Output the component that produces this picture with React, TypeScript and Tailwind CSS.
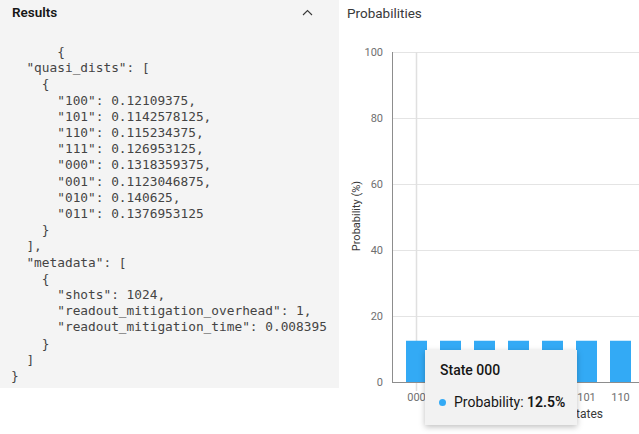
import React from "react";

const json = `      {
  "quasi_dists": [
    {
      "100": 0.12109375,
      "101": 0.1142578125,
      "110": 0.115234375,
      "111": 0.126953125,
      "000": 0.1318359375,
      "001": 0.1123046875,
      "010": 0.140625,
      "011": 0.1376953125
    }
  ],
  "metadata": [
    {
      "shots": 1024,
      "readout_mitigation_overhead": 1,
      "readout_mitigation_time": 0.008395
    }
  ]
}`;

const O = 339; // right panel origin
const bars = ["000", "001", "010", "011", "100", "101", "110", "111"];
const shownLabels = [0, 5, 6];

function Chart() {
  const yTicks = [100, 80, 60, 40, 20];
  const y0 = 382;
  const scale = 3.3;
  return (
    <svg width={300} height={434} className="absolute left-0 top-0" style={{ fontFamily: "Roboto, 'Noto Sans', sans-serif" }}>
      {yTicks.map((t) => (
        <line key={t} x1={392 - O} x2={300} y1={y0 - t * scale + 0.5} y2={y0 - t * scale + 0.5} stroke="#e4e4e4" strokeWidth={1} />
      ))}
      <line x1={416.5 - O} x2={416.5 - O} y1={52} y2={391} stroke="#e0e0e0" strokeWidth={1.5} />
      {bars.map((b, i) => (
        <rect key={b} x={406 - O + i * 34} y={y0 - 12.5 * scale} width={21} height={12.5 * scale} fill="#33aaf5" />
      ))}
      <line x1={392.5 - O} x2={392.5 - O} y1={52} y2={y0} stroke="#8d8d8d" strokeWidth={1} />
      <line x1={392 - O} x2={300} y1={y0 + 0.5} y2={y0 + 0.5} stroke="#8d8d8d" strokeWidth={1} />
      {[...yTicks, 0].map((t) => (
        <text key={t} x={383 - O} y={y0 - t * scale + 4} textAnchor="end" fontSize={11} fill="#6f6f6f">
          {t}
        </text>
      ))}
      {shownLabels.map((i) => (
        <text key={bars[i]} x={416.5 - O + i * 34} y={401} textAnchor="middle" fontSize={11} fill="#6f6f6f">
          {bars[i]}
        </text>
      ))}
      <text x={603 - O} y={418} textAnchor="end" fontSize={12} fill="#393939">
        Computational basis states
      </text>
      <text transform={`translate(${360 - O},216) rotate(-90)`} textAnchor="middle" fontSize={11} fill="#393939">
        Probability (%)
      </text>
    </svg>
  );
}

export default function App() {
  return (
    <div className="flex w-[639px] h-[434px] bg-white overflow-hidden" style={{ fontFamily: "Roboto, 'Noto Sans', sans-serif" }}>
      <div className="w-[339px] shrink-0 flex flex-col">
        <div className="bg-[#f4f4f4] h-[388px] flex flex-col">
          <div className="flex items-center justify-between h-[24px] pl-[12px] pr-[26px] pt-[1px]">
            <span className="text-[13.5px] font-semibold text-[#161616]">Results</span>
            <svg width="11" height="7" viewBox="0 0 11 7">
              <polyline points="1,6 5.5,1.5 10,6" fill="none" stroke="#393939" strokeWidth="1.1" />
            </svg>
          </div>
          <pre
            className="mt-[20px] pl-[11px] text-[12.8px] leading-[16.2px] text-[#444444] m-0"
            style={{ fontFamily: "'DejaVu Sans Mono', 'Liberation Mono', monospace" }}
          >
            {json}
          </pre>
        </div>
      </div>
      <div className="relative flex-1">
        <div className="pl-[8px] pt-[3px] text-[13.5px] text-[#393939]">Probabilities</div>
        <Chart />
        <div className="absolute left-[86px] top-[350px] w-[152px] h-[75px] bg-[#f2f2f2] shadow-[0_2px_6px_rgba(0,0,0,0.25)] pl-[15px] pt-[11px]">
          <div className="text-[14px] font-medium text-[#161616] leading-[18px]">State 000</div>
          <div className="flex items-center mt-[14px] text-[14px] text-[#161616] leading-[18px]">
            <span className="w-[7px] h-[7px] rounded-full bg-[#33aaf5] ml-[-1px] mr-[8px]" />
            <span>Probability:&nbsp;</span>
            <span className="font-semibold">12.5%</span>
          </div>
        </div>
      </div>
    </div>
  );
}
